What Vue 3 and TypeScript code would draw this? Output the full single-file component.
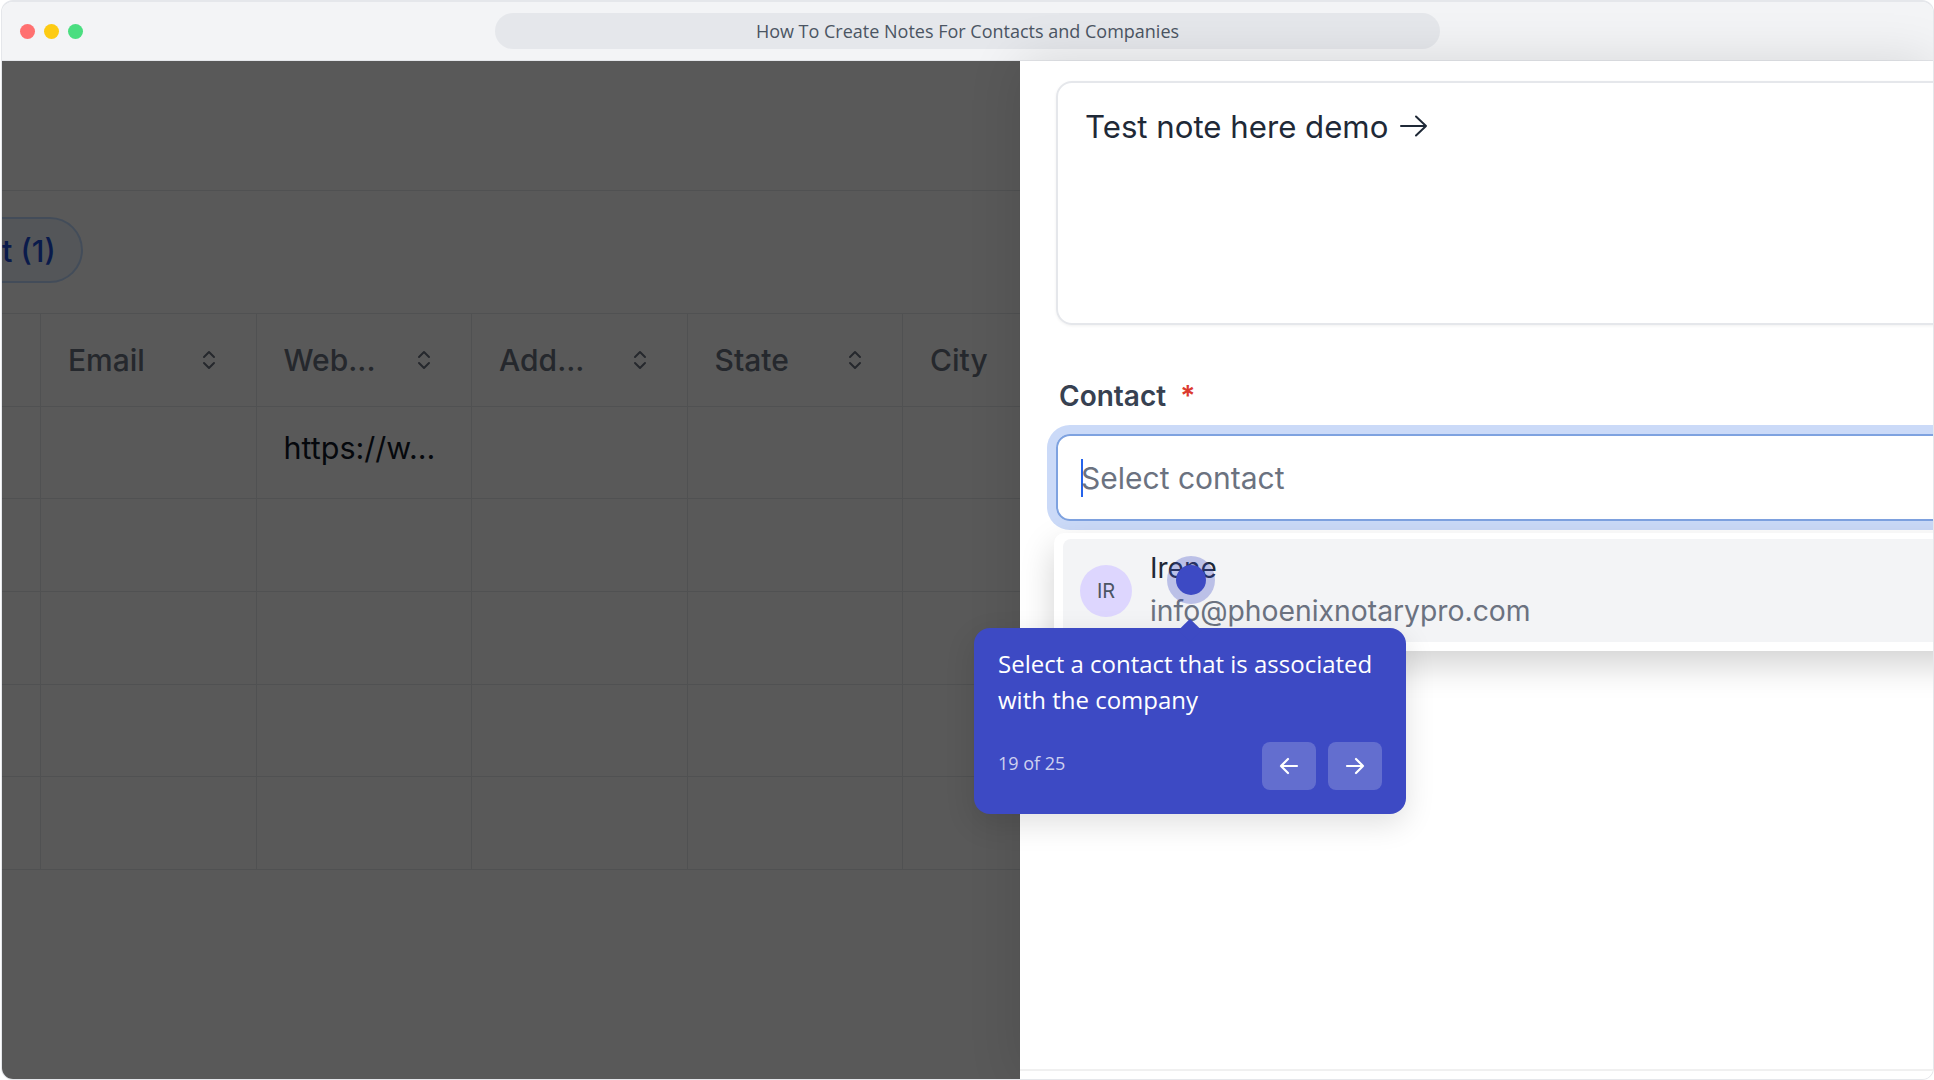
<script setup lang="ts">
const columns = [
  { label: '', sortable: false },
  { label: 'Email', sortable: true },
  { label: 'Web...', sortable: true },
  { label: 'Add...', sortable: true },
  { label: 'State', sortable: true },
  { label: 'City', sortable: false },
]

const rows = [
  ['', '', 'https://w...', '', '', ''],
  ['', '', '', '', '', ''],
  ['', '', '', '', '', ''],
  ['', '', '', '', '', ''],
  ['', '', '', '', '', ''],
]
</script>

<template>
  <div class="window">
    <!-- 标题栏 -->
    <header class="titlebar">
      <div class="dots">
        <span class="dot red"></span>
        <span class="dot yellow"></span>
        <span class="dot green"></span>
      </div>
      <div class="address">How To Create Notes For Contacts and Companies</div>
    </header>

    <div class="content">
      <!-- 左侧被遮罩的表格 -->
      <section class="page">
        <div class="page-top"></div>
        <div class="toolbar">
          <span class="pill">t (1)</span>
        </div>
        <div class="table">
          <div class="row head">
            <div v-for="(col, i) in columns" :key="i" class="cell">
              <span>{{ col.label }}</span>
              <svg v-if="col.sortable" class="sort" width="16" height="22" viewBox="0 0 16 22" fill="none">
                <path d="M3 8l5-5 5 5M3 14l5 5 5-5" stroke="currentColor" stroke-width="2" stroke-linecap="round" stroke-linejoin="round" />
              </svg>
            </div>
          </div>
          <div v-for="(row, r) in rows" :key="r" class="row body">
            <div v-for="(value, c) in row" :key="c" class="cell">{{ value }}</div>
          </div>
        </div>
        <div class="overlay"></div>
      </section>

      <!-- 右侧表单 -->
      <section class="panel">
        <div class="note">
          <span>Test note here demo</span>
          <svg class="note-arrow" width="30" height="24" viewBox="0 0 30 24" fill="none">
            <path d="M2 12h25M17 2.500l10 9.500-10 9.500" stroke="#1f2937" stroke-width="2" stroke-linecap="round" stroke-linejoin="round" />
          </svg>
        </div>

        <div class="label">Contact <span class="required">*</span></div>

        <div class="input">
          <span class="caret"></span>
          <span class="placeholder">Select contact</span>
        </div>

        <div class="menu">
          <div class="option">
            <span class="avatar">IR</span>
            <div class="option-text">
              <div class="name">Irene</div>
              <div class="mail">info@phoenixnotarypro.com</div>
            </div>
          </div>
        </div>

        <div class="panel-footer"></div>
      </section>

      <!-- 引导提示 -->
      <span class="beacon"><span class="beacon-core"></span></span>
      <aside class="tip">
        <span class="tip-arrow"></span>
        <p class="tip-text">Select a contact that is associated with the company</p>
        <div class="tip-foot">
          <span class="tip-count">19 of 25</span>
          <div class="tip-buttons">
            <button class="tip-btn" type="button">
              <svg width="22" height="22" viewBox="0 0 22 22" fill="none">
                <path d="M19 11H3M10 4l-7 7 7 7" stroke="#fff" stroke-width="2.2" stroke-linecap="round" stroke-linejoin="round" />
              </svg>
            </button>
            <button class="tip-btn" type="button">
              <svg width="22" height="22" viewBox="0 0 22 22" fill="none">
                <path d="M3 11h16M12 4l7 7-7 7" stroke="#fff" stroke-width="2.2" stroke-linecap="round" stroke-linejoin="round" />
              </svg>
            </button>
          </div>
        </div>
      </aside>
    </div>
  </div>
</template>

<style>
html,
body {
  margin: 0;
  background: #fff;
}
</style>

<style scoped>
* {
  box-sizing: border-box;
}

.window {
  width: 1933px;
  height: 1080px;
  margin-left: 1px;
  display: flex;
  flex-direction: column;
  border: 1px solid #e5e7eb;
  border-top-width: 2px;
  border-radius: 12px;
  overflow: hidden;
  background: #fff;
  font-family: Inter, "Liberation Sans", sans-serif;
}

.titlebar {
  height: 59px;
  flex: none;
  position: relative;
  display: flex;
  align-items: center;
  background: #f3f4f6;
  border-bottom: 1px solid #e5e7eb;
}

.dots {
  display: flex;
  gap: 9px;
  margin-left: 18px;
}

.dot {
  width: 15px;
  height: 15px;
  border-radius: 50%;
}

.red { background: #ff7070; }
.yellow { background: #fdcb13; }
.green { background: #4ade80; }

.address {
  width: 945px;
  height: 36px;
  margin-left: 412px;
  border-radius: 18px;
  background: #e5e7eb;
  color: #4b5563;
  font: 18px/36px "Open Sans", sans-serif;
  text-align: center;
}

.content {
  flex: 1;
  min-height: 0;
  display: flex;
  position: relative;
}

.page {
  width: 1018px;
  flex: none;
  position: relative;
  overflow: hidden;
  background: #fff;
}

.page-top {
  height: 130px;
  border-bottom: 1px solid #e5e7eb;
}

.toolbar {
  height: 122.500px;
  display: flex;
  align-items: center;
  padding-bottom: 3px;
  border-bottom: 1px solid #e5e7eb;
}

.pill {
  height: 66px;
  padding: 0 25px 0 0;
  display: flex;
  align-items: center;
  border: 2px solid #bfdbfe;
  border-left: 0;
  border-radius: 0 33px 33px 0;
  background: #eff6ff;
  color: #1d4ed8;
  font-size: 30.500px;
  font-weight: 500;
}

.row {
  display: grid;
  grid-template-columns: 39px repeat(5, 215.500px);
  height: 92.700px;
  border-bottom: 1px solid #e5e7eb;
  color: #111827;
  font-size: 30.500px;
}

.head {
  height: 93px;
  color: #6b7280;
  font-size: 30px;
  font-weight: 500;
}

.cell {
  min-width: 0;
  display: flex;
  align-items: center;
  justify-content: space-between;
  padding: 0 40px 0 27px;
  border-right: 1px solid #e5e7eb;
  white-space: nowrap;
}

.cell:first-child {
  padding: 0;
}

.body .cell {
  padding-bottom: 9px;
}

.sort {
  flex: none;
  margin-right: -1px;
  color: #6b7280;
}

.overlay {
  position: absolute;
  inset: 0;
  background: rgba(0, 0, 0, 0.65);
}

.panel {
  flex: 1;
  min-width: 0;
  position: relative;
  overflow: hidden;
  padding: 20px 0 0 36px;
  background: #fff;
  box-shadow: 0 0 50px rgba(0, 0, 0, 0.12);
}

.note {
  width: 1000px;
  height: 244px;
  padding: 21px 27px;
  display: flex;
  align-items: flex-start;
  border: 2px solid #e5e7eb;
  border-radius: 16px;
  box-shadow: 0 1px 3px rgba(0, 0, 0, 0.06);
  color: #1f2937;
  font-size: 31.200px;
  line-height: 46px;
}

.note-arrow {
  margin: 10px 0 0 11px;
}

.label {
  margin: 52px 0 19px 3px;
  color: #374151;
  font-size: 28px;
  font-weight: 600;
  line-height: 38px;
}

.required {
  margin-left: 7px;
  color: #dc3a2f;
}

.input {
  width: 1000px;
  height: 87px;
  display: flex;
  align-items: center;
  padding-left: 23px;
  border: 2px solid #7ea2e0;
  border-radius: 14px;
  box-shadow: 0 0 0 9px #cbdaf8;
  color: #6b7280;
  font-size: 30px;
}

.caret {
  width: 2px;
  height: 38px;
  flex: none;
  background: #2563eb;
}

.placeholder {
  margin-left: -2px;
}

.menu {
  width: 1000px;
  height: 118px;
  margin: 12px 0 0 -2px;
  padding: 6px 9px 9px;
  border-radius: 10px;
  background: #fff;
  box-shadow: 0 14px 34px rgba(0, 0, 0, 0.18);
}

.option {
  height: 103px;
  display: flex;
  align-items: center;
  padding-left: 17px;
  border-radius: 8px;
  background: #f3f4f6;
}

.avatar {
  width: 52px;
  height: 52px;
  flex: none;
  display: flex;
  align-items: center;
  justify-content: center;
  border-radius: 50%;
  background: #ddd6fe;
  color: #4b5563;
  font-size: 20px;
}

.option-text {
  margin-left: 18px;
}

.name {
  margin-top: -2px;
  color: #1f2937;
  font-size: 28px;
  line-height: 42px;
}

.mail {
  margin-top: 1px;
  color: #6b7280;
  font-size: 28.300px;
  line-height: 42px;
}

.panel-footer {
  position: absolute;
  left: 0;
  right: 0;
  bottom: 8px;
  height: 2px;
  background: #f0f0f0;
}

.beacon {
  position: absolute;
  left: 1165px;
  top: 495px;
  width: 48px;
  height: 48px;
  display: flex;
  align-items: center;
  justify-content: center;
  border-radius: 50%;
  background: rgba(61, 74, 196, 0.3);
}

.beacon-core {
  width: 30px;
  height: 30px;
  border-radius: 50%;
  background: #3d4ac4;
}

.tip {
  position: absolute;
  left: 972px;
  top: 567px;
  width: 432px;
  height: 186px;
  padding: 18px 24px 0 24px;
  border-radius: 16px;
  background: #3d4ac4;
  color: #fff;
  font-family: "Open Sans", sans-serif;
  box-shadow: 0 10px 30px rgba(0, 0, 0, 0.12);
}

.tip-arrow {
  position: absolute;
  left: 208px;
  top: -6px;
  width: 16px;
  height: 16px;
  background: #3d4ac4;
  transform: rotate(45deg);
}

.tip-text {
  position: relative;
  margin: 0;
  font-size: 24px;
  line-height: 36px;
}

.tip-foot {
  display: flex;
  align-items: center;
  justify-content: space-between;
  margin-top: 24px;
}

.tip-count {
  margin-top: -6px;
  color: rgba(255, 255, 255, 0.75);
  font-size: 18px;
}

.tip-buttons {
  display: flex;
  gap: 12px;
}

.tip-btn {
  width: 54px;
  height: 48px;
  display: flex;
  align-items: center;
  justify-content: center;
  padding: 0;
  border: 0;
  border-radius: 8px;
  background: rgba(255, 255, 255, 0.2);
}
</style>
